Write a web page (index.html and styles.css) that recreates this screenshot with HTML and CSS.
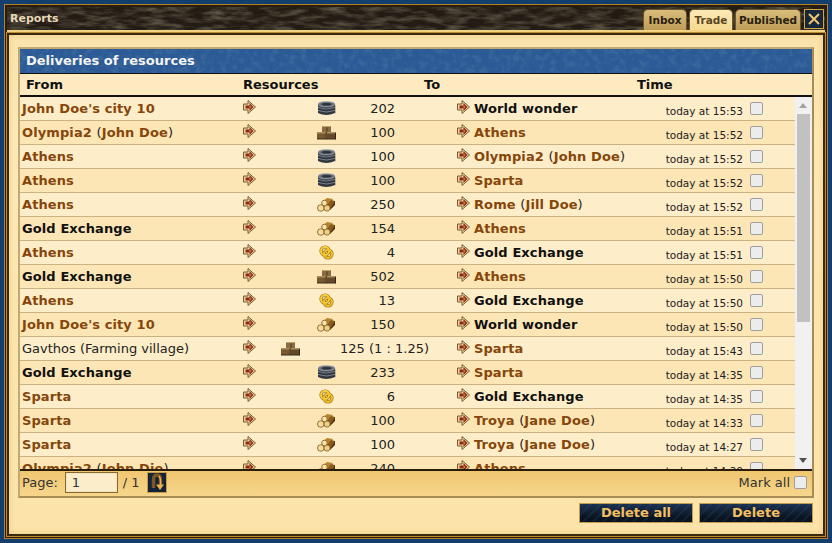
FILE: index.html
```html
<!DOCTYPE html>
<html lang="en">

<head>
  <meta charset="UTF-8">
  <title>Reports</title>
  <link rel="stylesheet" href="styles.css">
</head>

<body>
  <svg class="defs" width="0" height="0">
    <defs>
      <filter id="grain" x="0" y="0" width="100%" height="100%">
        <feTurbulence type="fractalNoise" baseFrequency="0.05 0.2" numOctaves="4" seed="7"/>
        <feColorMatrix values="0 0 0 0 0.24  0 0 0 0 0.2  0 0 0 0 0.14  1.3 0 0 0 -0.5"/>
      </filter>
      <filter id="weave" x="0" y="0" width="100%" height="100%">
        <feTurbulence type="fractalNoise" baseFrequency="0.16" numOctaves="3" seed="3"/>
        <feColorMatrix values="0 0 0 0 0.1  0 0 0 0 0.22  0 0 0 0 0.38  1 0 0 0 -0.45"/>
      </filter>
      <symbol id="arrow" viewBox="0 0 13 14">
        <path d="M.5 4h4.500V.500L12.500 7 5 13.500V10H.5z" fill="#ecd39b" stroke="#7a5a34" stroke-width="1"/>
        <path d="M2.500 5.500H6.500V3L10.500 7 6.500 11V8.500H2.500z" fill="#8a2a1a"/>
        <path d="M6.500 5l2 2-2 2z" fill="#d08a32"/>
      </symbol>
      <symbol id="iron" viewBox="0 0 19 15">
        <path d="M1 3v9q8 4 17 0V3z" fill="#33383f"/>
        <path d="M1 6.500q8 3 17 0M1 9.500q8 3 17 0" stroke="#78828d" stroke-width="1" fill="none"/>
        <path d="M18 4v8.500l1-.5V5z" fill="#c9b48a"/>
        <ellipse cx="9.500" cy="3.200" rx="8.500" ry="2.700" fill="#6b747e" stroke="#a9b1b9" stroke-width=".7"/>
        <ellipse cx="9.500" cy="3.200" rx="5" ry="1.300" fill="#2e3238"/>
      </symbol>
      <symbol id="stone" viewBox="0 0 19 15">
        <path d="M5 2l1-1h8v6H5z" fill="#8c6b42"/>
        <path d="M5 2l1-1h8l-1 1z" fill="#bda274"/>
        <path d="M10 2.500v4" stroke="#4c3820"/>
        <path d="M0 7h9v7H0z" fill="#77582f"/>
        <path d="M9.500 7H18v7H9.500z" fill="#654a28"/>
        <path d="M0 7h18v1.500H0z" fill="#ac8e60"/>
        <path d="M9.200 7v7" stroke="#3d2b16"/>
        <path d="M18 7l1 1v6l-1 .5z" fill="#2f2416"/>
        <path d="M0 14h19" stroke="#3b2c1b"/>
      </symbol>
      <symbol id="wood" viewBox="0 0 19 15">
        <path d="M12 3l6 1v4l-5 5z" fill="#4a3217"/>
        <path d="M4 6l6-5 6 1-5 6z" fill="#b9822f"/>
        <path d="M9 9l5-6 4 1.500-4 6z" fill="#8d5a1e"/>
        <circle cx="3.800" cy="11" r="3.300" fill="#f5da98" stroke="#7c5a24" stroke-width=".8"/>
        <circle cx="10" cy="11" r="3.100" fill="#f0cf85" stroke="#7c5a24" stroke-width=".8"/>
        <circle cx="7.500" cy="6" r="2.800" fill="#f8e1a4" stroke="#7c5a24" stroke-width=".8"/>
      </symbol>
      <symbol id="gold" viewBox="0 0 15 15">
        <circle cx="6" cy="6" r="4" fill="none" stroke="#9a7012" stroke-width="3.200"/>
        <circle cx="9" cy="9" r="4" fill="none" stroke="#9a7012" stroke-width="3.200"/>
        <circle cx="6" cy="6" r="4" fill="none" stroke="#f6cf3a" stroke-width="2"/>
        <circle cx="9" cy="9" r="4" fill="none" stroke="#f2c02c" stroke-width="2"/>
      </symbol>
    </defs>
  </svg>

  <div class="window">
    <div class="titlebar">
      <svg class="grain" width="100%" height="100%"><rect width="100%" height="100%" filter="url(#grain)"/></svg>
      <span class="title">Reports</span>
      <div class="tabs">
        <a class="tab">Inbox</a>
        <a class="tab cur">Trade</a>
        <a class="tab tab-wide">Published</a>
      </div>
      <a class="close"><svg width="14" height="14" viewBox="0 0 14 14"><path d="M2 2l10 10M12 2L2 12" stroke="#f0c56c" stroke-width="2"/></svg></a>
    </div>

    <div class="content">
      <div class="panel">
        <div class="panel-head">
          <svg class="grain" width="100%" height="100%"><rect width="100%" height="100%" filter="url(#weave)"/></svg>
          <span>Deliveries of resources</span>
        </div>
        <div class="cols">
          <span class="col-from">From</span>
          <span class="col-res">Resources</span>
          <span class="col-to">To</span>
          <span>Time</span>
        </div>

        <div class="list">
          <div class="rows">
            <div class="row">
              <span class="name link">John Doe's city 10</span>
              <div class="res"><svg class="arr"><use href="#arrow"/></svg><svg class="icon"><use href="#iron"/></svg><span class="amount">202</span></div>
              <div class="to"><svg class="arr"><use href="#arrow"/></svg><span class="name">World wonder</span></div>
              <span class="time">today at 15:53</span>
              <span class="check"></span>
            </div>
            <div class="row">
              <span class="name link">Olympia2 <i>(</i>John Doe<i>)</i></span>
              <div class="res"><svg class="arr"><use href="#arrow"/></svg><svg class="icon"><use href="#stone"/></svg><span class="amount">100</span></div>
              <div class="to"><svg class="arr"><use href="#arrow"/></svg><span class="name link">Athens</span></div>
              <span class="time">today at 15:52</span>
              <span class="check"></span>
            </div>
            <div class="row">
              <span class="name link">Athens</span>
              <div class="res"><svg class="arr"><use href="#arrow"/></svg><svg class="icon"><use href="#iron"/></svg><span class="amount">100</span></div>
              <div class="to"><svg class="arr"><use href="#arrow"/></svg><span class="name link">Olympia2 <i>(</i>John Doe<i>)</i></span></div>
              <span class="time">today at 15:52</span>
              <span class="check"></span>
            </div>
            <div class="row">
              <span class="name link">Athens</span>
              <div class="res"><svg class="arr"><use href="#arrow"/></svg><svg class="icon"><use href="#iron"/></svg><span class="amount">100</span></div>
              <div class="to"><svg class="arr"><use href="#arrow"/></svg><span class="name link">Sparta</span></div>
              <span class="time">today at 15:52</span>
              <span class="check"></span>
            </div>
            <div class="row">
              <span class="name link">Athens</span>
              <div class="res"><svg class="arr"><use href="#arrow"/></svg><svg class="icon"><use href="#wood"/></svg><span class="amount">250</span></div>
              <div class="to"><svg class="arr"><use href="#arrow"/></svg><span class="name link">Rome <i>(</i>Jill Doe<i>)</i></span></div>
              <span class="time">today at 15:52</span>
              <span class="check"></span>
            </div>
            <div class="row">
              <span class="name">Gold Exchange</span>
              <div class="res"><svg class="arr"><use href="#arrow"/></svg><svg class="icon"><use href="#wood"/></svg><span class="amount">154</span></div>
              <div class="to"><svg class="arr"><use href="#arrow"/></svg><span class="name link">Athens</span></div>
              <span class="time">today at 15:51</span>
              <span class="check"></span>
            </div>
            <div class="row">
              <span class="name link">Athens</span>
              <div class="res"><svg class="arr"><use href="#arrow"/></svg><svg class="icon"><use href="#gold"/></svg><span class="amount">4</span></div>
              <div class="to"><svg class="arr"><use href="#arrow"/></svg><span class="name">Gold Exchange</span></div>
              <span class="time">today at 15:51</span>
              <span class="check"></span>
            </div>
            <div class="row">
              <span class="name">Gold Exchange</span>
              <div class="res"><svg class="arr"><use href="#arrow"/></svg><svg class="icon"><use href="#stone"/></svg><span class="amount">502</span></div>
              <div class="to"><svg class="arr"><use href="#arrow"/></svg><span class="name link">Athens</span></div>
              <span class="time">today at 15:50</span>
              <span class="check"></span>
            </div>
            <div class="row">
              <span class="name link">Athens</span>
              <div class="res"><svg class="arr"><use href="#arrow"/></svg><svg class="icon"><use href="#gold"/></svg><span class="amount">13</span></div>
              <div class="to"><svg class="arr"><use href="#arrow"/></svg><span class="name">Gold Exchange</span></div>
              <span class="time">today at 15:50</span>
              <span class="check"></span>
            </div>
            <div class="row">
              <span class="name link">John Doe's city 10</span>
              <div class="res"><svg class="arr"><use href="#arrow"/></svg><svg class="icon"><use href="#wood"/></svg><span class="amount">150</span></div>
              <div class="to"><svg class="arr"><use href="#arrow"/></svg><span class="name">World wonder</span></div>
              <span class="time">today at 15:50</span>
              <span class="check"></span>
            </div>
            <div class="row">
              <span class="village">Gavthos (Farming village)</span>
              <div class="res res-rate"><svg class="arr"><use href="#arrow"/></svg><svg class="icon"><use href="#stone"/></svg><span class="amount">125 (1 : 1.25)</span></div>
              <div class="to"><svg class="arr"><use href="#arrow"/></svg><span class="name link">Sparta</span></div>
              <span class="time">today at 15:43</span>
              <span class="check"></span>
            </div>
            <div class="row">
              <span class="name">Gold Exchange</span>
              <div class="res"><svg class="arr"><use href="#arrow"/></svg><svg class="icon"><use href="#iron"/></svg><span class="amount">233</span></div>
              <div class="to"><svg class="arr"><use href="#arrow"/></svg><span class="name link">Sparta</span></div>
              <span class="time">today at 14:35</span>
              <span class="check"></span>
            </div>
            <div class="row">
              <span class="name link">Sparta</span>
              <div class="res"><svg class="arr"><use href="#arrow"/></svg><svg class="icon"><use href="#gold"/></svg><span class="amount">6</span></div>
              <div class="to"><svg class="arr"><use href="#arrow"/></svg><span class="name">Gold Exchange</span></div>
              <span class="time">today at 14:35</span>
              <span class="check"></span>
            </div>
            <div class="row">
              <span class="name link">Sparta</span>
              <div class="res"><svg class="arr"><use href="#arrow"/></svg><svg class="icon"><use href="#wood"/></svg><span class="amount">100</span></div>
              <div class="to"><svg class="arr"><use href="#arrow"/></svg><span class="name link">Troya <i>(</i>Jane Doe<i>)</i></span></div>
              <span class="time">today at 14:33</span>
              <span class="check"></span>
            </div>
            <div class="row">
              <span class="name link">Sparta</span>
              <div class="res"><svg class="arr"><use href="#arrow"/></svg><svg class="icon"><use href="#wood"/></svg><span class="amount">100</span></div>
              <div class="to"><svg class="arr"><use href="#arrow"/></svg><span class="name link">Troya <i>(</i>Jane Doe<i>)</i></span></div>
              <span class="time">today at 14:27</span>
              <span class="check"></span>
            </div>
            <div class="row">
              <span class="name link">Olympia2 <i>(</i>John Die<i>)</i></span>
              <div class="res"><svg class="arr"><use href="#arrow"/></svg><svg class="icon"><use href="#wood"/></svg><span class="amount">240</span></div>
              <div class="to"><svg class="arr"><use href="#arrow"/></svg><span class="name link">Athens</span></div>
              <span class="time">today at 14:20</span>
              <span class="check"></span>
            </div>
          </div>
          <div class="scrollbar">
            <span class="sb-up"></span>
            <span class="sb-thumb"></span>
            <span class="sb-down"></span>
          </div>
        </div>

        <div class="pager">
          <span>Page:</span>
          <span class="page-input">1</span>
          <span>/ 1</span>
          <a class="page-go"><svg width="14" height="18" viewBox="0 0 14 18"><path d="M3.500 15V7q0-5 3.500-5t3.500 5v5" fill="none" stroke="#7c5526" stroke-width="3.500"/><path d="M6 11.500h8L10 17z" fill="#eeb14a"/><path d="M9 3q2 2 1.500 9" fill="none" stroke="#eeb14a" stroke-width="1.500"/></svg></a>
          <span class="mark-all">Mark all</span>
          <span class="check"></span>
        </div>
      </div>

      <div class="actions">
        <a class="btn">Delete all</a>
        <a class="btn">Delete</a>
      </div>
    </div>
  </div>
</body>

</html>
```

FILE: styles.css
```css
* {
  margin: 0;
  padding: 0;
  box-sizing: border-box;
}

body {
  width: 832px;
  height: 543px;
  overflow: hidden;
  padding: 5px;
  background-color: #123f6e;
  font-family: "DejaVu Sans", Verdana, sans-serif;
  font-size: 13px;
  color: #222;
}

.defs {
  position: absolute;
}

.window {
  display: flex;
  flex-direction: column;
  height: 533px;
  border: 2px solid #2b1d0c;
  outline: 1px solid #b5802c;
  background-color: #f3d27f;
}

.titlebar {
  position: relative;
  display: flex;
  align-items: flex-end;
  flex: none;
  height: 23px;
  background-color: #231c14;
}

.grain {
  position: absolute;
  left: 0;
  top: 0;
}

.title {
  position: relative;
  align-self: center;
  flex: 1;
  padding-left: 3px;
  font-size: 11px;
  font-weight: bold;
  color: #e6d9b8;
}

.tabs {
  position: relative;
  display: flex;
  gap: 2px;
}

.tab {
  width: 44px;
  height: 21px;
  border: 1px solid #6e5527;
  border-bottom: 0;
  border-radius: 5px 5px 0 0;
  background: linear-gradient(#d9bd7c, #bd9c58);
  font-size: 10.500px;
  font-weight: bold;
  line-height: 20px;
  text-align: center;
  color: #2a2110;
}

.tab-wide {
  width: 66px;
}

.tab.cur {
  background: linear-gradient(#fbe9b6, #f5d990);
  color: #5b4722;
}

.close {
  position: relative;
  display: flex;
  align-items: center;
  justify-content: center;
  width: 20px;
  height: 20px;
  margin: 0 1px 1px 3px;
  border: 1px solid #d8a544;
  background: #16263c;
}

.content {
  flex: 1;
  margin-top: 3px;
  padding: 12px 8px 0 9px;
  border: 2px solid #3b2810;
  outline: 1px solid #c08a2e;
  background: linear-gradient(#fae3ac, #fde9b6 20%, #fbe3aa);
  box-shadow: inset 0 0 6px #eccb82;
}

.panel {
  display: flex;
  flex-direction: column;
  width: 796px;
  height: 451px;
  border: 2px solid #a98c55;
  border-top-color: #c2a873;
  border-left-color: #c2a873;
  background-color: #fdeac0;
}

.panel-head {
  position: relative;
  flex: none;
  height: 25px;
  padding-left: 6px;
  border-bottom: 1px solid #111;
  background-color: #2b5a96;
  font-weight: bold;
  line-height: 23px;
  color: #f4f4f0;
}

.panel-head span {
  position: relative;
}

.cols {
  display: flex;
  flex: none;
  height: 23px;
  padding-left: 6px;
  border-bottom: 2px solid #111;
  font-weight: bold;
  line-height: 21px;
  color: #111;
}

.col-from {
  width: 217px;
}

.col-res {
  width: 181px;
}

.col-to {
  width: 213px;
}

.list {
  display: flex;
  flex: 1;
  min-height: 0;
  overflow: hidden;
}

.rows {
  flex: 1;
  min-width: 0;
}

.row {
  display: grid;
  grid-template-columns: 221px 214px 180px 106px 20px;
  align-items: center;
  height: 24px;
  padding-left: 2px;
  border-bottom: 1px solid #ccb283;
  background-color: #fdedc8;
}

.row:nth-child(even) {
  background-color: #fce6b6;
}

.name {
  font-weight: bold;
  letter-spacing: .1px;
  color: #111;
  white-space: nowrap;
}

.name.link {
  color: #86460b;
}

.name i {
  font-style: normal;
  font-weight: normal;
  color: #222;
}

.village {
  color: #222;
  white-space: nowrap;
}

.res,
.to {
  display: flex;
  align-items: center;
}

.arr {
  flex: none;
  width: 13px;
  height: 14px;
  margin-bottom: 4px;
}

.icon {
  flex: none;
  width: 19px;
  height: 15px;
  margin-left: 61px;
}

.res-rate .icon {
  margin-left: 25px;
}

.amount {
  width: 59px;
  text-align: right;
  white-space: nowrap;
}

.res-rate .amount {
  width: 129px;
}

.to .name {
  margin-left: 4px;
}

.time {
  margin-top: 5px;
  font-size: 10.500px;
  text-align: right;
  white-space: nowrap;
}

.check {
  display: block;
  justify-self: end;
  width: 13px;
  height: 13px;
  margin-bottom: 1px;
  border: 1px solid #9e9e9e;
  border-radius: 2px;
  background-color: #ececec;
}

.scrollbar {
  display: flex;
  flex-direction: column;
  flex: none;
  width: 17px;
  background-color: #f1f1f1;
}

.sb-up,
.sb-down {
  flex: none;
  width: 0;
  height: 0;
  margin: 6px 4px;
  border-left: 4px solid transparent;
  border-right: 4px solid transparent;
}

.sb-up {
  border-bottom: 5px solid #a3a3a3;
}

.sb-down {
  margin-top: auto;
  border-top: 5px solid #505050;
}

.sb-thumb {
  width: 13px;
  height: 208px;
  margin-left: 2px;
  background-color: #c1c1c1;
}

.pager {
  display: flex;
  align-items: center;
  flex: none;
  height: 27px;
  padding: 0 5px 3px 2px;
  border-top: 2px solid #2a1c0c;
  background: linear-gradient(#f0c670, #f6d68c);
  color: #333;
}

.page-input {
  width: 53px;
  height: 21px;
  margin: 0 5px 0 7px;
  padding-left: 6px;
  border: 1px solid #8a6a2a;
  box-shadow: inset 0 0 0 1px #efe3c8;
  background-color: #fbedca;
  line-height: 19px;
}

.page-go {
  display: flex;
  align-items: center;
  justify-content: center;
  width: 20px;
  height: 21px;
  margin-left: 7px;
  border: 1px solid #c99a45;
  background-color: #142338;
}

.mark-all {
  margin-left: auto;
  margin-right: 4px;
}

.pager .check {
  margin-bottom: 0;
}

.actions {
  display: flex;
  justify-content: flex-end;
  gap: 6px;
  margin-top: 5px;
  width: 796px;
  padding-right: 1px;
}

.btn {
  width: 114px;
  height: 20px;
  border: 1px solid #c39a4c;
  background:
    repeating-linear-gradient(135deg, rgba(70, 110, 160, .13) 0 2px, transparent 2px 7px),
    linear-gradient(#1b3150, #0a1320 75%);
  font-weight: bold;
  line-height: 18px;
  text-align: center;
  color: #f3bf60;
}
```
